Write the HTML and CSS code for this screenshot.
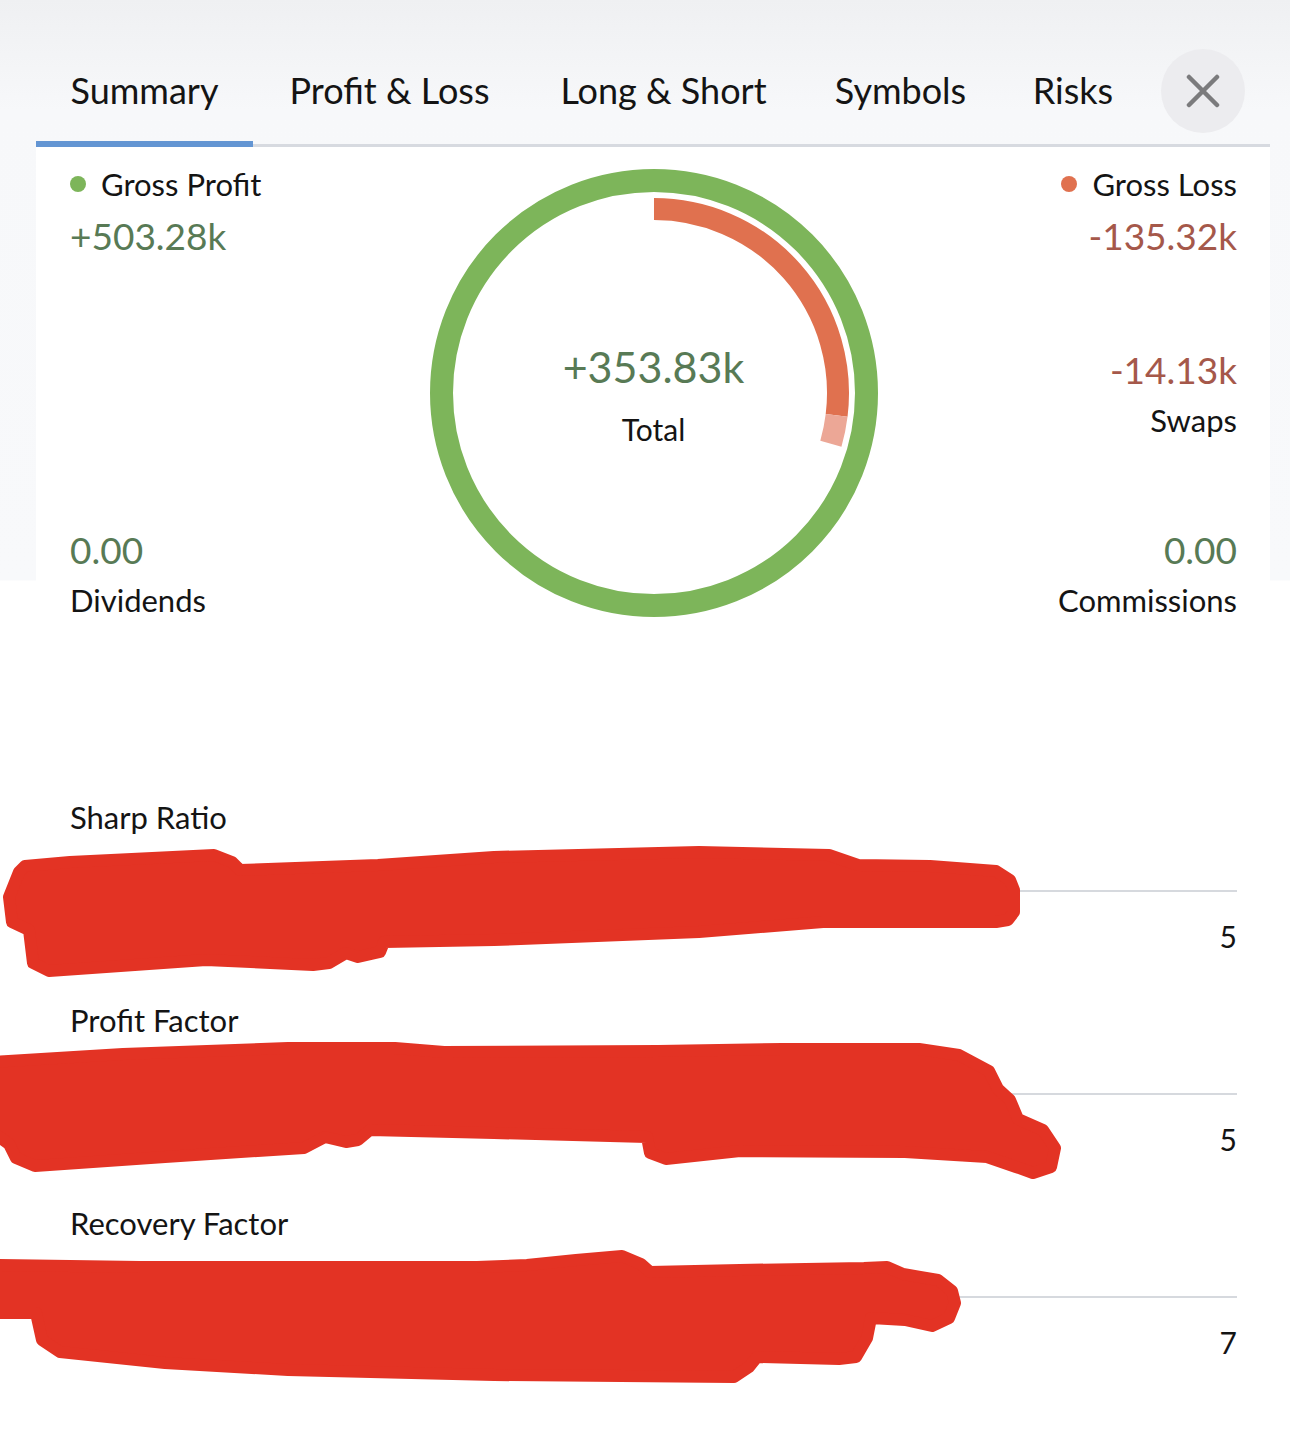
FILE: index.html
```html
<!DOCTYPE html>
<html lang="en">

<head>
    <meta charset="UTF-8">
    <title>Summary</title>
    <link rel="stylesheet" href="styles.css">
</head>

<body>

    <nav class="tabs">
        <a class="tab tab-summary active">Summary</a>
        <a class="tab tab-pl">Profit &amp; Loss</a>
        <a class="tab tab-ls">Long &amp; Short</a>
        <a class="tab tab-symbols">Symbols</a>
        <a class="tab tab-risks">Risks</a>
        <button class="close" aria-label="Close">
            <svg width="34" height="34" viewBox="0 0 34 34">
                <path d="M3 3 L31 31 M31 3 L3 31" stroke="#7b7b7d" stroke-width="4.5" stroke-linecap="round" fill="none" />
            </svg>
        </button>
    </nav>

    <main class="panel">
        <section class="summary">
            <div class="side">
                <div class="stat">
                    <div class="legend"><span class="dot dot-profit"></span>Gross Profit</div>
                    <div class="value pos value-top">+503.28k</div>
                </div>
                <div class="stat">
                    <div class="value pos">0.00</div>
                    <div class="caption">Dividends</div>
                </div>
            </div>

            <div class="donut">
                <svg width="460" height="460" viewBox="0 0 460 460">
                    <circle cx="230" cy="230" r="212.5" fill="none" stroke="#7db55a" stroke-width="23" />
                    <!-- gross loss arc, then swaps -->
                    <path d="M230 46 A184 184 0 0 1 412.63 252.42" fill="none" stroke="#e0714f" stroke-width="22" />
                    <path d="M412.63 252.42 A184 184 0 0 1 406.87 280.72" fill="none" stroke="#eca796" stroke-width="22" />
                </svg>
                <div class="donut-center">
                    <div class="total-value">+353.83k</div>
                    <div class="total-label">Total</div>
                </div>
            </div>

            <div class="side side-right">
                <div class="stat">
                    <div class="legend"><span class="dot dot-loss"></span>Gross Loss</div>
                    <div class="value neg value-top">-135.32k</div>
                </div>
                <div class="stat">
                    <div class="value neg">-14.13k</div>
                    <div class="caption">Swaps</div>
                </div>
                <div class="stat">
                    <div class="value pos">0.00</div>
                    <div class="caption">Commissions</div>
                </div>
            </div>
        </section>

        <section class="metrics">
            <div class="metric">
                <div class="metric-label">Sharp Ratio</div>
                <div class="track"></div>
                <div class="metric-value">5</div>
            </div>
            <div class="metric">
                <div class="metric-label">Profit Factor</div>
                <div class="track"></div>
                <div class="metric-value">5</div>
            </div>
            <div class="metric">
                <div class="metric-label">Recovery Factor</div>
                <div class="track"></div>
                <div class="metric-value">7</div>
            </div>
        </section>
    </main>

    <!-- marker strokes hiding the values -->
    <svg class="redact" width="1290" height="1452" viewBox="0 0 1290 1452">
        <g fill="#e33324" stroke="#e33324" stroke-width="12" stroke-linejoin="round">
            <path d="M25 866 L70 862 L214 855 L232 862 L240 870 L378 865 L494 857 L699 852 L829 855 L858 865 L930 866 L996 871 L1010 880 L1014 890 L1014 912 L1008 920 L996 922 L823 922 L699 932 L494 940 L384 942 L380 952 L358 957 L346 953 L329 963 L313 965 L206 960 L49 971 L33 963 L29 930 L12 922 L9 897 L19 872 Z" />
            <path d="M-8 1062 L123 1054 L288 1048 L395 1048 L444 1052 L658 1051 L782 1049 L919 1049 L959 1055 L989 1071 L998 1089 L1010 1100 L1018 1119 L1043 1130 L1055 1148 L1051 1167 L1033 1173 L1016 1167 L987 1157 L905 1152 L740 1151 L666 1159 L650 1153 L647 1137 L494 1133 L370 1130 L358 1140 L346 1142 L325 1137 L304 1148 L165 1157 L35 1166 L16 1158 L9 1144 L-8 1132 Z" />
            <path d="M-8 1265 L140 1267 L477 1267 L527 1265 L576 1260 L622 1256 L641 1264 L650 1272 L740 1270 L864 1268 L887 1267 L903 1274 L938 1280 L952 1291 L955 1303 L949 1318 L932 1326 L905 1320 L871 1318 L867 1338 L856 1357 L839 1359 L757 1357 L749 1367 L734 1377 L494 1375 L288 1370 L165 1363 L60 1352 L42 1340 L36 1313 L-8 1313 Z" />
        </g>
    </svg>

</body>

</html>
```

FILE: styles.css
```css
* {
    box-sizing: border-box;
}

html,
body {
    margin: 0;
    padding: 0;
}

body {
    position: relative;
    width: 1290px;
    min-height: 1452px;
    font-family: Lato, "Liberation Sans", sans-serif;
    color: #141414;
    background: linear-gradient(#eff0f2 0, #f7f8fa 110px, #f8f9fb 580px, #fff 581px);
}

/* tab bar */
.tabs {
    display: flex;
    width: 1234px;
    margin-left: 36px;
    padding-top: 44px;
    border-bottom: 3px solid #d7dae0;
}

.tab {
    flex: none;
    height: 103px;
    margin-bottom: -3px;
    border-bottom: 6px solid transparent;
    line-height: 93px;
    text-align: center;
    font-size: 36px;
    color: #141414;
}

.tab.active {
    border-bottom-color: #6395d3;
}

.tab-summary { width: 217px; }
.tab-pl { width: 273px; }
.tab-ls { width: 275px; }
.tab-symbols { width: 199px; }
.tab-risks { width: 146px; }

.close {
    flex: none;
    display: grid;
    place-items: center;
    width: 84px;
    height: 84px;
    margin: 5px 0 0 15px;
    padding: 0;
    border: none;
    border-radius: 50%;
    background: #ececef;
}

/* white sheet */
.panel {
    width: 1234px;
    min-height: 1305px;
    margin-left: 36px;
    padding: 16px 33px 0 34px;
    background: #fff;
}

.summary {
    display: grid;
    grid-template-columns: 1fr 460px 1fr;
}

.side {
    display: flex;
    flex-direction: column;
    justify-content: space-between;
    height: 460px;
    padding: 1px 0 3px;
}

.side-right {
    align-items: flex-end;
    text-align: right;
}

.legend {
    display: flex;
    align-items: center;
    gap: 15px;
    font-size: 31px;
    line-height: 40px;
}

.dot {
    width: 16px;
    height: 16px;
    border-radius: 50%;
}

.dot-profit { background: #7db55a; }
.dot-loss { background: #e0714f; }

.value {
    font-size: 37px;
    line-height: 48px;
}

.value-top {
    margin-top: 8px;
}

.pos { color: #587a55; }
.neg { color: #a5584a; }

.caption {
    margin-top: 6px;
    font-size: 31px;
    line-height: 40px;
}

.donut {
    position: relative;
    width: 460px;
    height: 460px;
}

.donut svg {
    display: block;
}

.donut-center {
    position: absolute;
    inset: 0;
    padding-top: 180px;
    text-align: center;
}

.total-value {
    font-size: 43px;
    line-height: 48px;
    color: #587a55;
}

.total-label {
    margin-top: 18px;
    font-size: 30px;
    line-height: 40px;
}

/* ratios */
.metrics {
    margin-top: 174px;
}

.metric {
    margin-bottom: 44px;
}

.metric-label {
    font-size: 31px;
    line-height: 40px;
}

.track {
    height: 2px;
    margin-top: 53px;
    background: #d6d9de;
}

.metric-value {
    margin-top: 24px;
    text-align: right;
    font-size: 30px;
    line-height: 40px;
}

.redact {
    position: absolute;
    top: 0;
    left: 0;
    pointer-events: none;
}
```
